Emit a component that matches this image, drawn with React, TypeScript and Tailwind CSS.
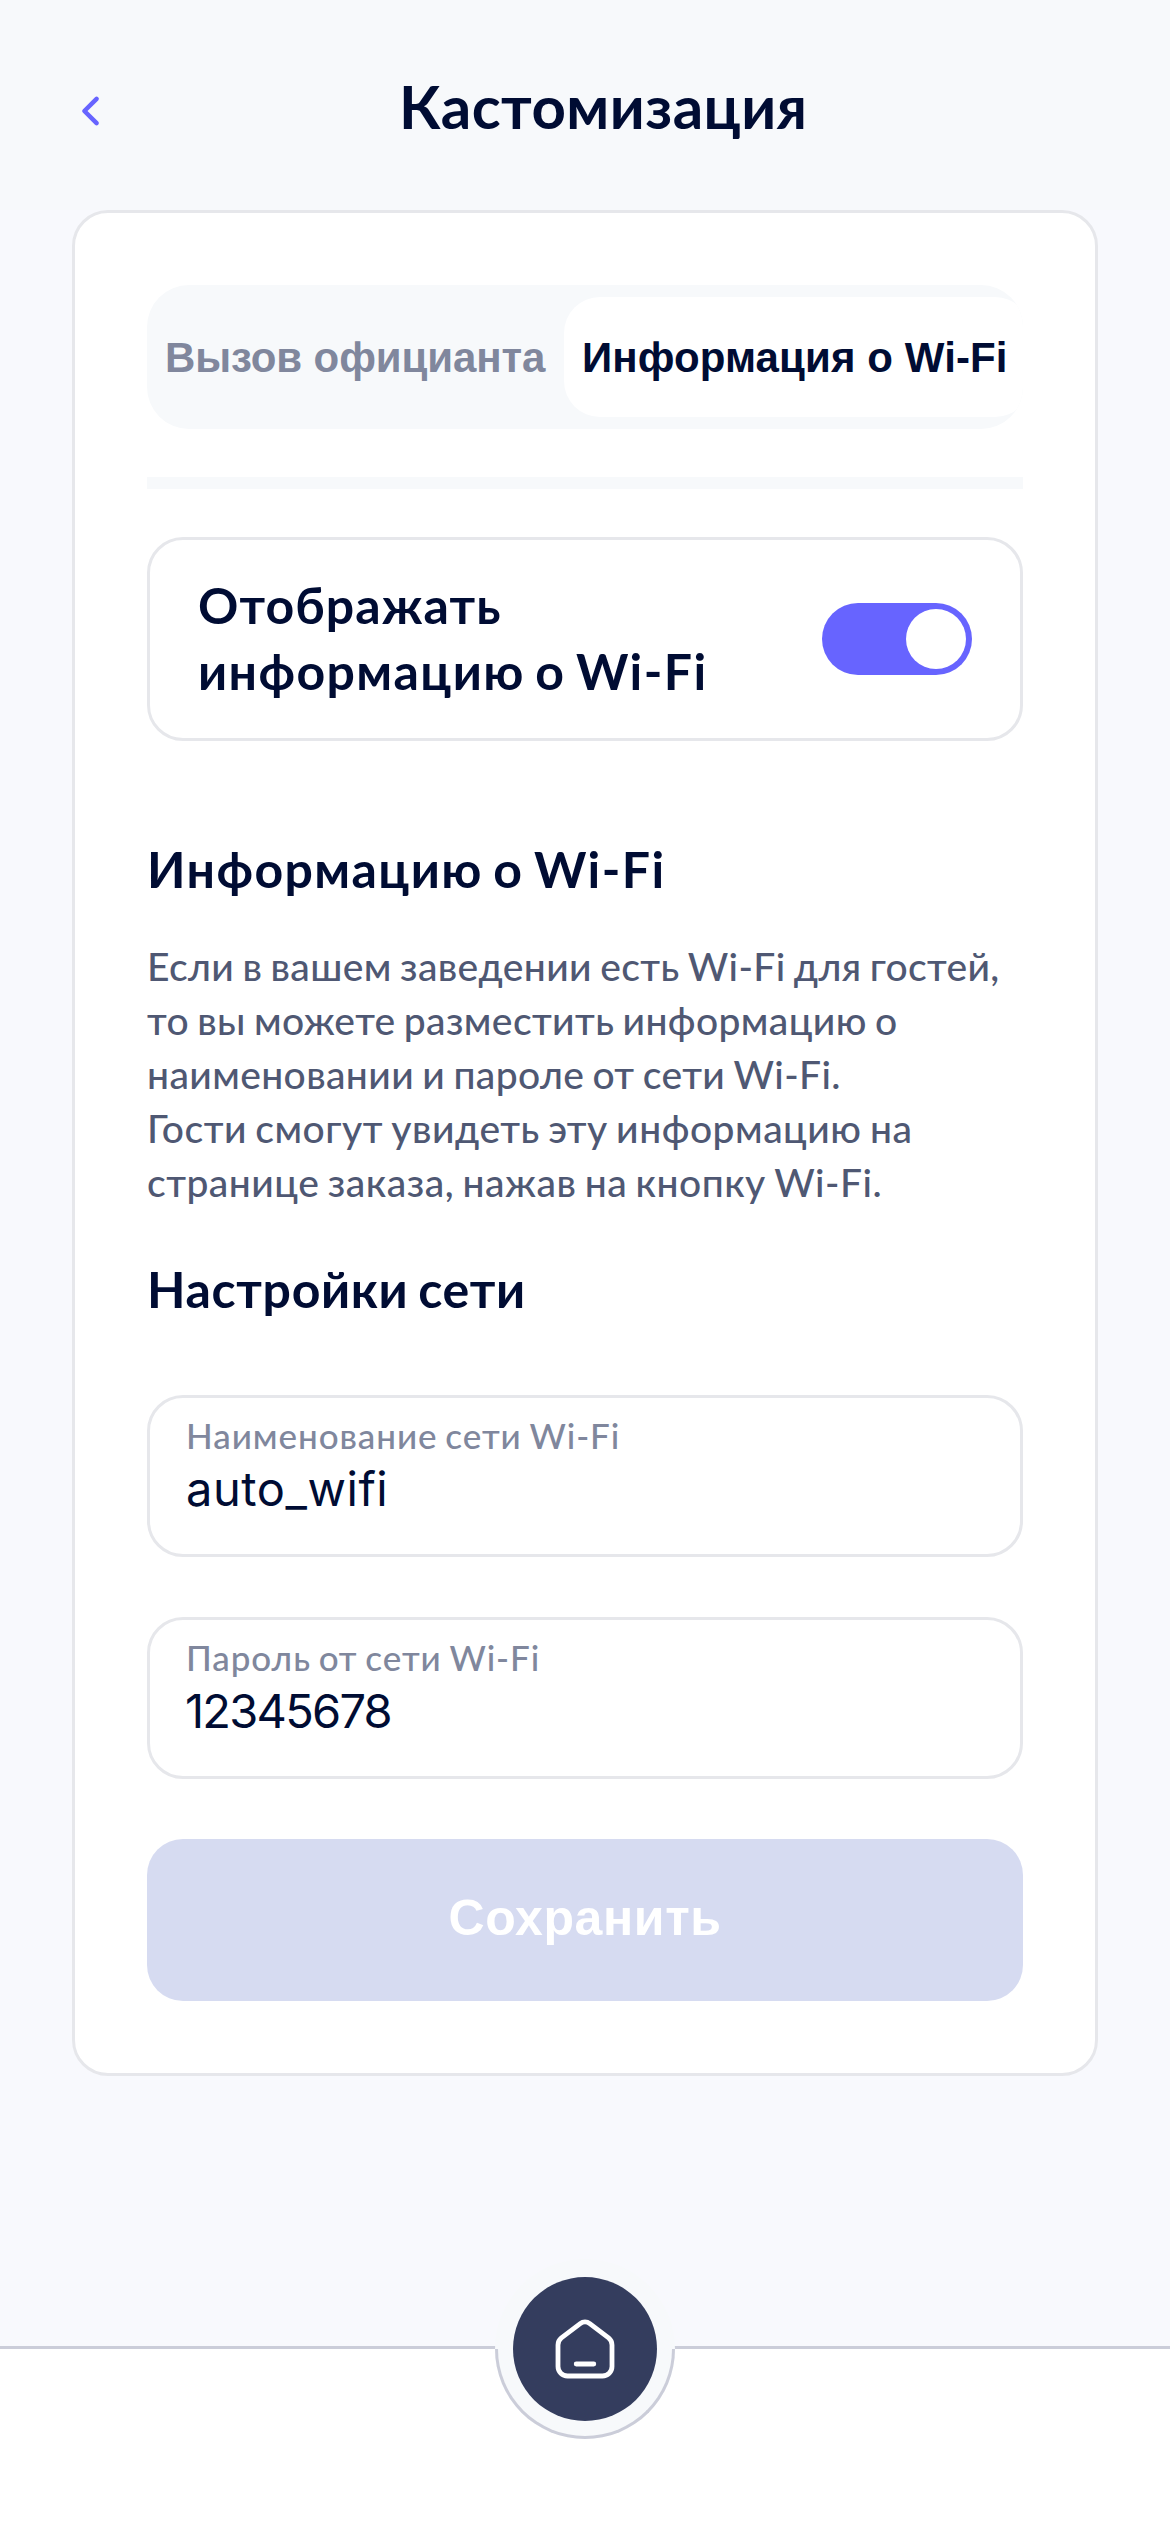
import type { ReactNode } from "react";

function Header() {
  return (
    <header className="flex h-[210px] items-start bg-[#f7f9fb] pt-[70px]">
      <button aria-label="Назад" className="ml-[69px] flex h-[82px] w-[48px] items-center justify-center">
        <svg width="48" height="48" viewBox="0 0 48 48" fill="none" stroke="#6764ff" strokeWidth="4.5" strokeLinecap="round" strokeLinejoin="round">
          <path d="M27.6 11.8 15.4 24l12.2 12.2" />
        </svg>
      </button>
      <h1 className="ml-[282px] text-[60px] leading-[72px] font-bold tracking-[0.45px] text-[#000c33]">Кастомизация</h1>
    </header>
  );
}

function Tabs() {
  return (
    <div className="flex h-[144px] items-center overflow-hidden rounded-[42px] bg-[#f7f9fb] font-['Liberation_Sans',Arial,sans-serif] text-[42px] font-bold">
      <button className="h-[120px] w-[417px] shrink-0 pl-[18px] text-left tracking-[-0.1px] whitespace-nowrap text-[#80879d]">Вызов официанта</button>
      <button className="h-[120px] w-[467px] shrink-0 rounded-[36px] bg-white pl-[18px] text-left tracking-[0.1px] whitespace-nowrap text-[#000c33]">Информация о Wi-Fi</button>
    </div>
  );
}

function Field({ label, value }: { label: ReactNode; value: ReactNode }) {
  return (
    <div className="h-[162px] rounded-[36px] border-[3px] border-[#e6e7eb] pt-[16px] pl-[36px]">
      <div className="text-[35px] leading-[42px] font-medium tracking-[0.93px] text-[#80879d] [word-spacing:-2px]">{label}</div>
      <div className="mt-[4px] font-['Inter',sans-serif] text-[47px] leading-[57px] text-[#000c33]">{value}</div>
    </div>
  );
}

function BottomNav() {
  return (
    <nav className="relative mt-auto h-[186px] border-t-[3px] border-[#cbcdd9] bg-white">
      <div className="absolute -top-[90px] left-[495px] size-[180px] rounded-full bg-[#f7f9fb]">
        <div className="absolute inset-x-0 bottom-0 h-[90px] rounded-b-full border-[3px] border-t-0 border-[#cbcdd9]" />
        <button aria-label="Главная" className="absolute top-[18px] left-[18px] flex size-[144px] items-center justify-center rounded-full bg-[#343d5e]">
          <svg width="72" height="72" viewBox="0 0 72 72" fill="none" stroke="#fff" strokeWidth="4.8" strokeLinecap="round" strokeLinejoin="round">
            <path d="M31.2 10.6a7.8 7.8 0 0 1 9.6 0L59.6 24.8a9 9 0 0 1 3.4 7.2V53.5a9.5 9.5 0 0 1-9.5 9.5H18.5a9.5 9.5 0 0 1-9.5-9.5V32a9 9 0 0 1 3.4-7.2Z" />
            <path d="M27.2 51h17.6" />
          </svg>
        </button>
      </div>
    </nav>
  );
}

export default function App() {
  return (
    <div className="flex h-[2532px] w-[1170px] flex-col overflow-hidden bg-[#f8f9fd] font-['Lato','Noto_Sans',sans-serif] text-[#000c33]">
      <Header />
      <main className="mx-[72px] h-[1866px] shrink-0 rounded-[36px] border-[3px] border-[#e6e7eb] bg-white px-[72px] pt-[72px]">
        <Tabs />
        <div className="mt-[48px] h-[12px] bg-[#f7f9fb]" />

        <section className="mt-[48px] flex h-[204px] items-center justify-between rounded-[36px] border-[3px] border-[#e6e7eb] pr-[48px] pl-[48px]">
          <h2 className="pb-[2px] text-[50px] leading-[66px] font-bold tracking-[1.4px] [word-spacing:-3px]">
            <span className="tracking-[1.05px]">Отображать</span>
            <br />
            информацию о Wi-Fi
          </h2>
          <button role="switch" aria-checked="true" aria-label="Отображать информацию о Wi-Fi" className="flex h-[72px] w-[150px] items-center justify-end rounded-full bg-[#6764ff] pr-[6px]">
            <span className="size-[60px] rounded-full bg-white" />
          </button>
        </section>

        <h2 className="mt-[95px] text-[50px] leading-[66px] font-bold tracking-[1.4px] [word-spacing:-3px]">Информацию о Wi-Fi</h2>
        <div className="mt-[37px] text-[39px] leading-[54px] font-medium whitespace-nowrap text-[#4f5873] [word-spacing:-2px]">
          <p className="tracking-[0.38px]">
            Если в вашем заведении есть Wi-Fi для гостей,
            <br />
            то вы можете разместить информацию о
            <br />
            наименовании и пароле от сети Wi-Fi.
          </p>
          <p className="tracking-[0.5px]">
            Гости смогут увидеть эту информацию на
            <br />
            странице заказа, нажав на кнопку Wi-Fi.
          </p>
        </div>

        <h2 className="mt-[47px] text-[50px] leading-[66px] font-bold tracking-[0.65px] [word-spacing:-3px]">Настройки сети</h2>
        <div className="mt-[73px] flex flex-col gap-[60px]">
          <Field label="Наименование сети Wi-Fi" value={<span className="tracking-[0.55px]">auto_wifi</span>} />
          <Field label="Пароль от сети Wi-Fi" value={<span className="-ml-[1px] tracking-[-1.75px]">12345678</span>} />
          <button disabled className="h-[162px] rounded-[36px] bg-[#d6dbf1] pb-[3px] font-['Liberation_Sans',Arial,sans-serif] text-[50px] font-bold tracking-[0.6px] text-white">
            Сохранить
          </button>
        </div>
      </main>
      <BottomNav />
    </div>
  );
}
